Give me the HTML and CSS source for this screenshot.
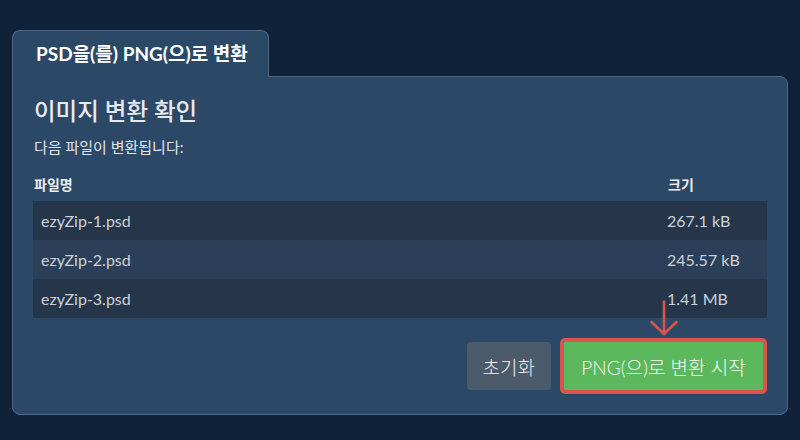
FILE: index.html
```html
<!DOCTYPE html>
<html lang="ko">
<head>
<meta charset="utf-8">
<title>PSD to PNG</title>
<link rel="stylesheet" href="styles.css">
</head>
<body>
<div class="wrap">
  <div class="tab">PSD을(를) PNG(으)로 변환</div>
  <div class="panel">
    <h1 class="title">이미지 변환 확인</h1>
    <p class="sub">다음 파일이 변환됩니다:</p>
    <table class="files">
      <thead>
        <tr><th class="c-name">파일명</th><th class="c-size">크기</th></tr>
      </thead>
      <tbody>
        <tr class="odd"><td>ezyZip-1.psd</td><td>267.1 kB</td></tr>
        <tr class="even"><td>ezyZip-2.psd</td><td>245.57 kB</td></tr>
        <tr class="odd"><td>ezyZip-3.psd</td><td>1.41 MB</td></tr>
      </tbody>
    </table>
    <div class="actions">
      <button class="btn btn-reset">초기화</button>
      <div class="start-wrap">
        <svg class="arrow" width="30" height="37" viewBox="0 0 30 37" fill="none" stroke="#d9534f" stroke-width="2.6" stroke-linecap="round" stroke-linejoin="round">
          <path d="M15 1.5 V34"/>
          <path d="M2.5 22 L15 34 L27.5 22"/>
        </svg>
        <button class="btn btn-start">PNG(으)로 변환 시작</button>
      </div>
    </div>
  </div>
</div>
</body>
</html>
```
FILE: styles.css
```css
html, body {
  margin: 0;
  padding: 0;
  background: #0f2239;
  width: 800px;
  height: 440px;
  overflow: hidden;
  font-family: Lato, "Noto Sans CJK KR", sans-serif;
  color: #e4e6ea;
}
.wrap {
  padding: 30px 12px 0 12px;
}
.tab {
  position: relative;
  z-index: 1;
  width: 257px;
  height: 47px;
  box-sizing: border-box;
  padding-left: 23px;
  line-height: 46px;
  font-size: 19px;
  font-weight: 700;
  color: #ffffff;
  background: #2c4867;
  border: 1px solid #4d6786;
  border-bottom: none;
  border-radius: 8px 8px 0 0;
  margin-bottom: -1px;
}
.panel {
  background: #2c4867;
  border: 1px solid #4d6786;
  border-radius: 0 8px 8px 8px;
  padding: 18px 20px 20px 20px;
}
.title {
  margin: 0 0 0 1px;
  font-size: 23.5px;
  line-height: 32px;
  font-weight: 500;
  color: #e8e9ec;
}
.sub {
  margin: 10px 0 0 1px;
  font-size: 15px;
  line-height: 20px;
  color: #e2e4e8;
}
.files {
  width: 100%;
  border-collapse: collapse;
  margin-top: 18px;
  font-size: 16px;
}
.files th {
  text-align: left;
  font-size: 14px;
  font-weight: 700;
  color: #eceef1;
  padding: 0 0 6px 1px;
  line-height: 20px;
}
.files th.c-size {
  width: 99px;
  padding-left: 9px;
}
.files td {
  height: 39px;
  padding: 0 8px;
  color: #cdd1d7;
  line-height: 20px;
}
.files tr.odd td {
  background: #25364b;
}
.files tr.even td {
  background: #2b4058;
}
.actions {
  margin-top: 20px;
  display: flex;
  justify-content: flex-end;
  align-items: center;
  gap: 9px;
}
.btn {
  font-family: Lato, "Noto Sans CJK KR", sans-serif;
  font-weight: 300;
  border: none;
  cursor: pointer;
  color: #ffffff;
}
.btn-reset {
  height: 48px;
  padding: 0 16px;
  border-radius: 4px;
  background: #4c5b6c;
  font-size: 19px;
  color: #eef0f2;
}
.start-wrap {
  position: relative;
}
.arrow {
  position: absolute;
  left: 50%;
  top: -38px;
  transform: translateX(-50%);
}
.btn-start {
  display: block;
  height: 56px;
  box-sizing: border-box;
  padding: 0 14px;
  border: 4px solid #d9534f;
  border-radius: 5px;
  background: #5cb85c;
  font-size: 19px;
  color: #f4fbf4;
  width: 207px;
}
```
